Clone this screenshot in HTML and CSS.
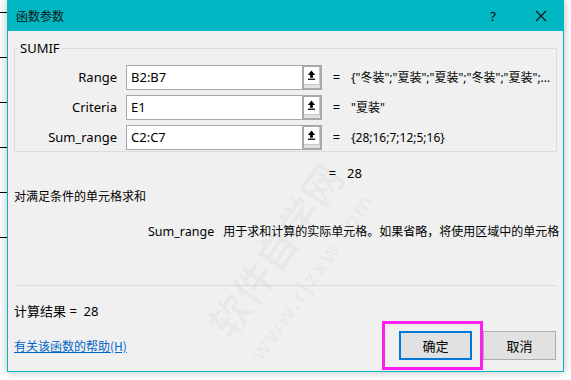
FILE: index.html
```html
<!DOCTYPE html>
<html lang="zh-CN">
<head>
  <meta charset="UTF-8">
  <title>函数参数</title>
  <link rel="stylesheet" href="styles.css">
</head>
<body>
  <div class="screen">
    <div class="sheet"></div>
    <div class="dialog">
      <div class="titlebar">
        <span class="title">函数参数</span>
        <span class="help">?</span>
        <svg class="close" width="12" height="12" viewBox="0 0 12 12">
          <path d="M1 1L11 11M11 1L1 11" stroke="#111" stroke-width="1.1" fill="none"/>
        </svg>
      </div>

      <div class="content">
        <fieldset class="group">
          <legend>SUMIF</legend>
          <div class="arg">
            <label>Range</label>
            <div class="field"><span class="input">B2:B7</span><span class="pick"><svg width="10" height="12" viewBox="0 0 10 12"><path d="M5 1L9 6H6.5V9H3.5V6H1Z" fill="#000"/><rect x="1" y="10" width="8" height="1.4" fill="#000"/></svg></span></div>
            <span class="eq">=</span>
            <span class="val">{"冬装";"夏装";"夏装";"冬装";"夏装";...</span>
          </div>
          <div class="arg">
            <label>Criteria</label>
            <div class="field"><span class="input">E1</span><span class="pick"><svg width="10" height="12" viewBox="0 0 10 12"><path d="M5 1L9 6H6.5V9H3.5V6H1Z" fill="#000"/><rect x="1" y="10" width="8" height="1.4" fill="#000"/></svg></span></div>
            <span class="eq">=</span>
            <span class="val">"夏装"</span>
          </div>
          <div class="arg">
            <label>Sum_range</label>
            <div class="field"><span class="input">C2:C7</span><span class="pick"><svg width="10" height="12" viewBox="0 0 10 12"><path d="M5 1L9 6H6.5V9H3.5V6H1Z" fill="#000"/><rect x="1" y="10" width="8" height="1.4" fill="#000"/></svg></span></div>
            <span class="eq">=</span>
            <span class="val">{28;16;7;12;5;16}</span>
          </div>
        </fieldset>

        <div class="total"><span class="eq">=</span><span class="val">28</span></div>
        <p class="desc">对满足条件的单元格求和</p>
        <p class="argdesc"><span class="argname">Sum_range</span>用于求和计算的实际单元格。如果省略，将使用区域中的单元格</p>

        <div class="result">计算结果 =&nbsp; 28</div>

        <div class="footer">
          <a class="helplink" href="#">有关该函数的帮助(H)</a>
          <div class="buttons">
            <button class="btn ok">确定</button>
            <button class="btn">取消</button>
          </div>
          <div class="mark"></div>
        </div>
      </div>

      <div class="watermark">软件自学网<small>www.rjzxw.com</small></div>
    </div>
  </div>
</body>
</html>
```

FILE: styles.css
```css
body {
  margin: 0;
  background: #fff;
  font-family: "Noto Sans", "Noto Sans CJK SC", sans-serif;
  font-size: 12px;
  color: #000;
}
.screen {
  display: flex;
  height: 380px;
  overflow: hidden;
}
.sheet {
  width: 7px;
  height: 260px;
  background: repeating-linear-gradient(to bottom, transparent 0 12px, #000 12px 13px, transparent 13px 45px);
}
.dialog {
  position: relative;
  width: 555px;
  height: 371px;
  border: 1px solid #00b7c3;
  border-top: none;
  background: #f0f0f0;
  box-shadow: 0 0 9px rgba(0, 0, 0, 0.28);
  display: flex;
  flex-direction: column;
  overflow: hidden;
}
.titlebar {
  height: 31px;
  background: #00b7c3;
  display: flex;
  align-items: center;
  padding: 0 16px 0 8px;
}
.title {
  flex: 1;
  font-family: "Noto Sans CJK SC", sans-serif;
  font-size: 12px;
  color: #111;
}
.help {
  font-size: 13px;
  margin-right: 39px;
}
.content {
  padding: 0 6px 0 6px;
  display: flex;
  flex-direction: column;
  flex: 1;
}
.group {
  margin: 10px 0 0 0;
  padding: 7px 0 6px 0;
  border: 1px solid #dcdcdc;
  height: 96px;
}
.group legend {
  padding: 0 2px;
  margin-left: 3px;
  font-size: 13px;
  line-height: 14px;
}
.arg {
  display: flex;
  align-items: center;
  height: 30px;
}
.arg label {
  width: 102px;
  text-align: right;
  font-size: 13px;
  padding-right: 9px;
}
.field {
  display: flex;
  height: 25px;
  width: 196px;
}
.input {
  flex: 1;
  background: #fff;
  border: 1px solid #a8a8a8;
  border-right: none;
  padding: 0 4px;
  font-size: 13px;
  line-height: 23px;
}
.pick {
  width: 16px;
  border: 2px solid #a8a8a8;
  background: #e2e2e2;
  display: flex;
  align-items: flex-start;
  justify-content: flex-start;
}
.pick svg {
  background: #fff;
  padding: 2px 3px 3px 3px;
  border-right: 1px solid #c8c8c8;
  border-bottom: 1px solid #c8c8c8;
}
.eq {
  width: 29px;
  text-align: center;
  font-size: 13px;
}
.val {
  font-size: 12px;
  white-space: nowrap;
}
.total {
  display: flex;
  margin: 12px 0 0 304px;
  height: 18px;
  align-items: center;
}
.total .val {
  font-size: 13px;
}
.desc {
  margin: 5px 0 0 0;
  font-size: 12px;
  font-family: "Noto Sans CJK SC", sans-serif;
}
.argdesc {
  margin: 18px 0 0 134px;
  font-family: "Noto Sans CJK SC", sans-serif;
  font-size: 12px;
  white-space: nowrap;
}
.argname {
  font-family: "Noto Sans", sans-serif;
  font-size: 12.5px;
  margin-right: 9px;
}
.result {
  margin-top: 45px;
  border-top: 1px solid #dcdcdc;
  padding-top: 15px;
  font-size: 13px;
}
.footer {
  position: relative;
  display: flex;
  align-items: center;
  justify-content: space-between;
  margin-top: 11px;
}
.helplink {
  color: #0066cc;
  font-family: "Noto Sans CJK SC", sans-serif;
  font-size: 12px;
}
.buttons {
  display: flex;
  gap: 11px;
  margin-right: 1px;
}
.btn {
  width: 73px;
  height: 29px;
  background: #e1e1e1;
  border: 1px solid #adadad;
  font-family: "Noto Sans CJK SC", sans-serif;
  font-size: 13px;
  color: #000;
  padding: 0;
}
.btn.ok {
  border: 2px solid #0078d7;
}
.mark {
  position: absolute;
  left: 368px;
  top: -10px;
  width: 95px;
  height: 43px;
  border: 3px solid #ff1cf0;
}
.watermark {
  position: absolute;
  left: 185px;
  top: 218px;
  transform: rotate(-55deg);
  font-family: "Noto Sans CJK SC", sans-serif;
  font-size: 40px;
  font-weight: bold;
  color: rgba(0, 0, 0, 0.03);
  white-space: nowrap;
  display: flex;
  flex-direction: column;
  line-height: 44px;
  pointer-events: none;
}
.watermark small {
  font-size: 22px;
  letter-spacing: 2px;
}
```
